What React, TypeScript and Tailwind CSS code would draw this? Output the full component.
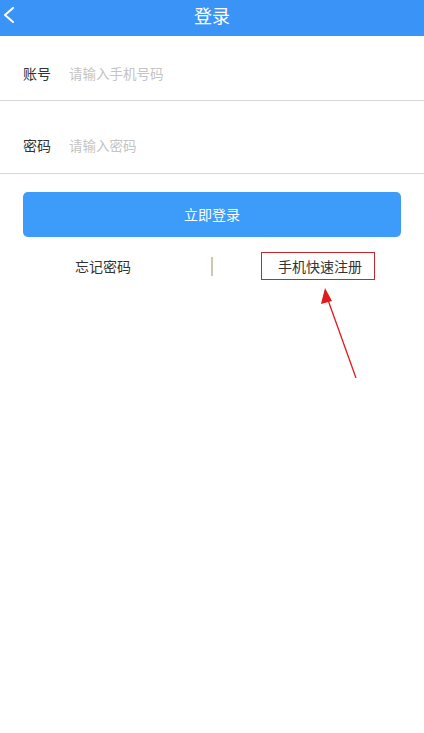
export default function App() {
  return (
    <main
      className="relative flex flex-col w-full min-h-[733px] bg-white"
      style={{ fontFamily: '"Noto Sans CJK SC", "Noto Sans", sans-serif' }}
    >
      {/* header */}
      <div className="relative flex items-center justify-center h-[36px] bg-[#3a94f8]">
        <svg
          className="absolute left-[2px] top-[7px]"
          width="14"
          height="16"
          viewBox="0 0 14 16"
          fill="none"
        >
          <path d="M11 1 L3 8 L11 15" stroke="white" strokeWidth="2" strokeLinecap="round" strokeLinejoin="round" />
        </svg>
        <h1 className="text-[18px] leading-none text-white pb-[6px]">登录</h1>
      </div>

      {/* form rows */}
      <div className="flex items-center pt-[20px] pb-[10px] border-b border-[#d6d6d6]">
        <div className="flex items-center h-[34px] pl-[23px]">
          <span className="w-[46px] text-[14px] text-[#333]">账号</span>
          <span className="text-[13.5px] text-[#c4c4c4]">请输入手机号码</span>
        </div>
      </div>
      <div className="flex items-center pt-[27px] pb-[11px] border-b border-[#d6d6d6]">
        <div className="flex items-center h-[34px] pl-[23px]">
          <span className="w-[46px] text-[14px] text-[#333]">密码</span>
          <span className="text-[13.5px] text-[#c4c4c4]">请输入密码</span>
        </div>
      </div>

      {/* login button */}
      <div className="px-[23px] pt-[18px]">
        <button className="w-full h-[45px] rounded-[5px] bg-[#3d9bfa] text-white text-[14px]">
          立即登录
        </button>
      </div>

      {/* links */}
      <div className="flex items-center pt-[15px]">
        <div className="flex justify-center w-[206px] text-[14px] text-[#333]">忘记密码</div>
        <div className="ml-[5px] w-[2px] h-[19px] bg-[#cfc6b0]" />
        <div className="flex flex-1 pl-[48px]">
          <div className="flex items-center justify-center w-[114px] h-[28px] pl-[4px] border border-[#c9262e] text-[14px] text-[#333]">
            手机快速注册
          </div>
        </div>
      </div>

      {/* annotation arrow */}
      <svg className="absolute left-0 top-0" width="424" height="400" viewBox="0 0 424 400" fill="none">
        <line x1="356" y1="378" x2="328" y2="300" stroke="#e01b1b" strokeWidth="1.3" />
        <polygon points="325,288 321,304 332,301" fill="#e01b1b" />
      </svg>
    </main>
  )
}
